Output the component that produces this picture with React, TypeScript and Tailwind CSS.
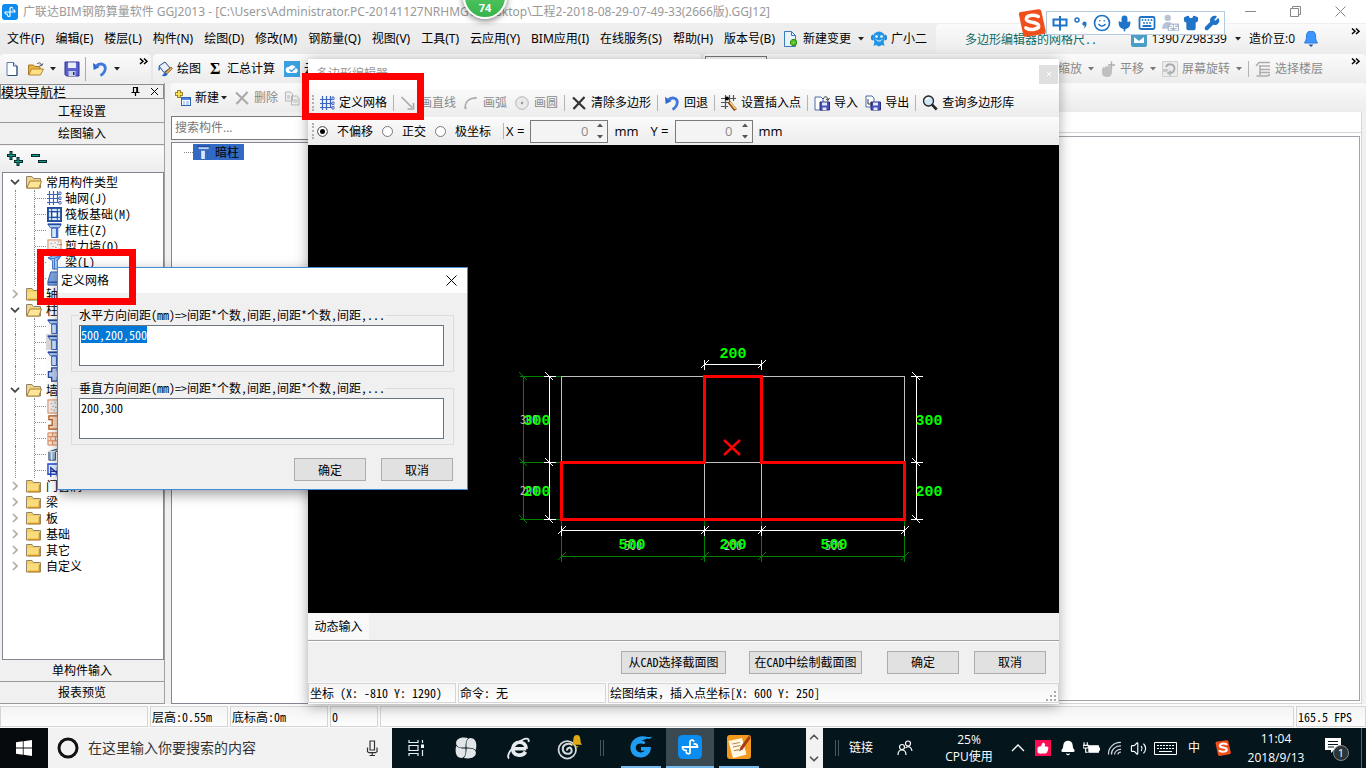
import { useEffect, useRef } from "react";
import type { ReactNode } from "react";
import {
  Smile, Mic, Shirt, Wrench, Keyboard, ThumbsUp, Bell, Volume2, ChevronUp, ChevronDown, X as XIcon,
} from "lucide-react";

const UI = "font-['Open_Sans','Noto_Sans_CJK_SC',sans-serif]";
const SONG = "font-['Noto_Sans_Mono_CJK_SC','Noto_Sans_CJK_SC',sans-serif]";

/* Fixed-pitch text: Latin glyphs take half the width of a Chinese glyph. */
function Song({ children }: { children: string }) {
  return <span className={`${SONG} block text-xs leading-4 whitespace-pre`}>{children}</span>;
}

function Svg({ children, size = 16, className = "" }: { children: ReactNode; size?: number; className?: string }) {
  return (
    <svg viewBox="0 0 16 16" width={size} height={size} fill="none" className={`shrink-0 ${className}`} aria-hidden="true">
      {children}
    </svg>
  );
}

const Caret = ({ color = "#222" }: { color?: string }) => (
  <svg width="6" height="4" viewBox="0 0 6 4" className="shrink-0" aria-hidden="true">
    <path d="M0 0h6L3 3.4z" fill={color} />
  </svg>
);
const More = () => (
  <svg width="9" height="7" viewBox="0 0 9 7" className="shrink-0" fill="none" stroke="#000" strokeWidth="1.5" aria-hidden="true">
    <path d="M1 .5l3 2.8L1 6M5 .5l3 2.8L5 6" />
  </svg>
);
const Sep = () => <span className="h-4 w-px shrink-0 bg-[#b4b4b4]" />;
const Grip = () => <span className="h-4 w-0 shrink-0 border-l-2 border-dotted border-[#b0b0b0]" />;

const AppLogo = ({ size = 16 }: { size?: number }) => (
  <Svg size={size}>
    <rect width="16" height="16" rx="3" fill="#0b8cf0" />
    <path d="M8 12V4.700C8 3.300 9.800 3 10.500 4M3 8h10M3 8c0 1.800 1.200 2.500 2.500 2.200M13 8c0-1.600-1-2.200-2.200-2M8 12c-.8.900-2.300.600-2.500-.600" stroke="#fff" strokeWidth="1.200" strokeLinecap="round" />
  </Svg>
);
const DocIcon = () => (
  <Svg>
    <path d="M3 1.500h6.500L13 5v9.500H3z" fill="#fdfeff" stroke="#5b7fa8" />
    <path d="M9.500 1.500V5H13" stroke="#3b608c" fill="#dbe8f6" />
    <path d="M13 5v9.500H4" stroke="#2f4c72" />
  </Svg>
);
const OpenIcon = () => (
  <Svg>
    <path d="M.500 14V4h5l1.500 1.500h5V8" fill="#e8b33c" stroke="#a8782a" />
    <path d="M3.500 8h12l-3 6H.800z" fill="#ffdf86" stroke="#b5862f" />
    <path d="M9 3c2-2 4-1 4.500 1.200M14.800 2.500l-1 2.200-2.200-.7" stroke="#3b4b60" />
  </Svg>
);
const SaveIcon = () => (
  <Svg>
    <path d="M1 1h14v14H2.500L1 13.500z" fill="#5a62cc" stroke="#2b3190" />
    <path d="M4 1.500h8V7H4z" fill="#e9edfb" />
    <path d="M4.500 10h7v5h-7z" fill="#cdd2ee" />
    <path d="M9 11h1.500v3H9z" fill="#23297c" />
  </Svg>
);
const UndoIcon = () => (
  <Svg>
    <path d="M1 2l.7 7 6-3z" fill="#2e66cf" />
    <path d="M4 5.500c3-4 9.500-3 9.300 2C13 11 11 13 8.500 14.500" stroke="#3f77dc" strokeWidth="2.800" />
  </Svg>
);
const PaintIcon = () => (
  <Svg>
    <path d="M2 5l6-4 5 6-6 4.500z" fill="#e8eef6" stroke="#2b4c7c" />
    <path d="M2 5c-1 2-1 4 0 5 1-1 1.500-2 1-4" fill="#3d7dca" />
    <path d="M15.500 7.500L10 13l-2 .5.500-2L14 6z" fill="#e2a64d" stroke="#7b5a26" strokeWidth=".7" />
    <path d="M8.500 11.500c-2 0-1.500 2.500-4 3 2.500 1.300 5.500.8 6-1.500z" fill="#2867bd" />
  </Svg>
);
const CloudIcon = () => (
  <Svg>
    <rect width="16" height="16" fill="#3aa0e0" />
    <path d="M4.500 12a3 3 0 01.3-6 4 4 0 017.200 1.200A2.500 2.500 0 0112 12z" fill="#fff" />
    <path d="M5.500 8.500L7.500 10.500l4-4" stroke="#3aa0e0" strokeWidth="1.400" />
  </Svg>
);
const NewItemIcon = () => (
  <Svg>
    <path d="M4 0v8M0 4h8" stroke="#7c6a18" strokeWidth="3.600" />
    <path d="M4 .8v6.400M.8 4h6.400" stroke="#f7e04a" strokeWidth="2" />
    <rect x="6.500" y="7.500" width="9" height="8" fill="#fff" stroke="#2f63b5" />
    <path d="M7 8h8v2H7z" fill="#4d89dd" />
    <path d="M8 12h2M11 12h3M8 14h2M11 14h3" stroke="#7aa5e0" />
  </Svg>
);
const Cross = ({ color }: { color: string }) => (
  <Svg><path d="M2 2.500l12 11.500M13.500 2L2.500 14" stroke={color} strokeWidth="2.200" /></Svg>
);
const CopyIcon = () => (
  <Svg>
    <path d="M1.500 2h5l2 2v7h-7zM7.500 6h5l2.500 2.300V15H7.500z" fill="#f0f0f0" stroke="#b5b5b5" />
    <path d="M3 6h3M3 8h3M9.500 10h4M9.500 12h4" stroke="#b5b5b5" />
  </Svg>
);
const GridIcon = () => (
  <Svg>
    <path d="M3.500 1v14M7.500 1v14M11.500 1v12M1 4.500h12M1 8.500h12M1 12.500h12" stroke="#3c63bd" strokeWidth="1.200" />
    <path d="M13 2h2v2.500h-2zM13 7h2v2.500h-2zM13 11.500h2V14h-2z" stroke="#3c63bd" strokeWidth=".9" />
  </Svg>
);
const LineIcon = () => <Svg><path d="M1.500 2L12 12.500M13.500 8v6h-6" stroke="#a8a8a8" strokeWidth="1.600" /></Svg>;
const ArcIcon = () => (
  <Svg>
    <path d="M2 13C2 7 6 3 12 3" stroke="#a8a8a8" strokeWidth="1.300" />
    <circle cx="2.500" cy="13" r="1.300" fill="#b5b5b5" /><circle cx="12.500" cy="3" r="1.300" fill="#b5b5b5" />
  </Svg>
);
const CircleIcon = () => (
  <Svg><circle cx="8" cy="8" r="6.300" fill="#e9e9e9" stroke="#b5b5b5" /><circle cx="8" cy="8" r="1.200" fill="#999" /></Svg>
);
const InsertIcon = () => (
  <Svg>
    <path d="M4.500 0v14M8.500 0v8M12.500 0v6M0 3.500h15M0 7.500h9M0 11.500h7" stroke="#555" strokeWidth="1.200" />
    <circle cx="6" cy="3.500" r="2" fill="#000" />
    <path d="M8 7l6.500 8" stroke="#8c4a20" strokeWidth="3.500" /><path d="M9 7l5.500 7" stroke="#f0cf72" strokeWidth="1.700" />
  </Svg>
);
const ImportIcon = () => (
  <Svg>
    <path d="M1 2h6l2 2v11H1z" fill="#fff" stroke="#4a6aa8" />
    <path d="M6 7h9.500v8H6z" fill="#4550b8" stroke="#262d80" />
    <path d="M8 7.500h5v3H8zM8.500 12.500h4V15h-4z" fill="#e5e8f8" />
    <path d="M9 4c1-3 5-3 5 1M15.500 3L14 5.500 12 4" stroke="#333" />
  </Svg>
);
const ExportIcon = () => (
  <Svg>
    <path d="M1 1h6l2 2v9H1z" fill="#fff" stroke="#4a6aa8" />
    <path d="M6 7h9.500v8H6z" fill="#4550b8" stroke="#262d80" />
    <path d="M8 7.500h5v3H8zM8.500 12.500h4V15h-4z" fill="#e5e8f8" />
    <path d="M3 4v5h4M5.500 7L7.500 9l-2 2" stroke="#333" />
  </Svg>
);
const SearchIcon = () => (
  <Svg>
    <circle cx="6.500" cy="6" r="5" fill="#cfe8f6" stroke="#222" strokeWidth="1.300" />
    <path d="M4 5c.5-1.500 1.500-2 3-2" stroke="#fff" strokeWidth="1.500" />
    <path d="M10 9.700l4.700 4.800" stroke="#222" strokeWidth="2.600" />
  </Svg>
);
const NewChangeIcon = () => (
  <Svg>
    <path d="M1.500.500h7l4 4v11h-11z" fill="#e8f3fd" stroke="#3b7cb8" />
    <path d="M8.500.500v4h4" stroke="#3b7cb8" />
    <path d="M10.500 8v7M7 11.500h7" stroke="#2e8f13" strokeWidth="3.800" /><path d="M10.500 9v5M8 11.500h5" stroke="#68cf2f" strokeWidth="1.800" />
  </Svg>
);
const MascotIcon = () => (
  <Svg>
    <path d="M2 4l-1.500 3L2 9M14 4l1.500 3L14 9" stroke="#1b7fd4" strokeWidth="2" />
    <circle cx="8" cy="6.500" r="6" fill="#2196e8" />
    <path d="M3.500 10h9l1 5-2.500-1L8 15.500 5 14l-2.500 1z" fill="#2196e8" />
    <circle cx="5.500" cy="5.500" r="1.300" fill="#fff" /><circle cx="10.500" cy="5.500" r="1.300" fill="#fff" />
    <path d="M5 8.500c1.500 2 4.500 2 6 0" stroke="#fff" />
  </Svg>
);
const HandIcon = () => (
  <Svg>
    <path d="M2 8l1.500-2 1.500.5L6 5l2 .5L9 5l2 1 1 1.500V11c0 3-2 5-5 5s-5-1.500-5-4z" fill="#c0c0c0" />
    <path d="M11.500.500v7M8 4h7" stroke="#adadad" strokeWidth="1.400" />
  </Svg>
);
const RotateIcon = () => (
  <Svg>
    <path d="M.500.500h15v15H.500z" fill="#ececec" stroke="#cfcfcf" />
    <path d="M4 6c1.500-4 8-3.500 8.500 1 .3 3-2 5-4.500 5" stroke="#a8a8a8" strokeWidth="1.800" /><path d="M9 9v6L4.500 12z" fill="#b5b5b5" />
    <path d="M1 8h6l-2 3H1z" fill="#c8c8c8" />
  </Svg>
);
const FloorsIcon = () => (
  <Svg><path d="M1 5l3-3.500h11M4 5h11M5 8.500h10M4 11.500h11M1.500 15H12l3-1.500M5 5v9" stroke="#adadad" strokeWidth="1.500" /></Svg>
);
const SogouIcon = ({ size = 16 }: { size?: number }) => (
  <Svg size={size}>
    <path d="M.500 3Q.300 2 1.500 1.700L11.500.200Q13 0 13.300 1.200L15.800 12.500Q16 14 14.500 14.300L4.500 15.900Q3.200 16 3 14.800z" fill="#f04e1a" />
    <path d="M11.600 4.300C9 3 4.500 3.500 4.800 6c.3 2 6.700 1.200 7 3.500.2 2.200-4.500 3-7.300 1.300" stroke="#fff" strokeWidth="2" strokeLinecap="round" />
  </Svg>
);

const ColumnIcon = () => (
  <Svg size={15}>
    <path d="M.800 1h14.400l-2 4H3.500z" fill="#b4d0f7" stroke="#3a66bd" />
    <path d="M1 1.500h14" stroke="#23499c" strokeWidth="1.600" />
    <path d="M5 5.500h6.500v10H5z" fill="#d7e7fc" stroke="#2c5ab8" />
    <path d="M9.500 5.500h2v10h-2z" fill="#3667c4" />
  </Svg>
);
const RaftIcon = () => (
  <Svg size={15}>
    <rect x="1" y="1" width="14" height="14" fill="#d5e8fa" stroke="#1d4c9c" strokeWidth="2" />
    <path d="M5 1v14M11 1v14M1 5h14M1 11h14" stroke="#1d4c9c" /><rect x="5" y="5" width="6" height="6" fill="#fff" stroke="#1d4c9c" strokeWidth="1.500" />
  </Svg>
);
const WallIcon = () => (
  <Svg size={15}>
    <rect x="1" y="1" width="14" height="14" fill="#f1efee" stroke="#d88250" />
    <path d="M4 5h1M8 4h1M11 6h1M6 8h1M9 9h1M4 11h1M12 11h1M7 12h1M12 3h1" stroke="#666" /><path d="M13 6h3M13 11h3" stroke="#c5652c" />
  </Svg>
);
const BeamIcon = () => (
  <Svg size={15}>
    <path d="M1 3l5-2h9l-4 5v9H6V6z" fill="#b9d5f8" stroke="#2d62b8" /><path d="M2 3.500h6L15 1M8 4v11M10 6l3-3" stroke="#3f7bd0" strokeWidth="1.300" />
  </Svg>
);
const SlabIcon = () => (
  <Svg size={15}><path d="M4 1h11v14H1V11z" fill="#7ea5df" stroke="#2d56a8" /><path d="M1 12h14" stroke="#2d56a8" strokeWidth="1.500" /></Svg>
);
const CrossColIcon = () => (
  <Svg size={15}><path d="M5 1h6v3h3v7h-3v4H5v-4H1.500V5H5z" fill="#b9cff5" stroke="#26479c" strokeWidth="1.400" /></Svg>
);
const PillarIcon = () => (
  <Svg size={15}><path d="M2 1h13v4h-3v6h3v4H2v-4h3.500V5H2z" fill="#fbd9bd" stroke="#b0561e" strokeWidth="1.300" /></Svg>
);
const BrickIcon = () => (
  <Svg size={15}><path d="M1 2h14v13H1zM1 6h14M1 10.500h14M6 2v4M11 2v4M4 6v4.500M9 6v4.500M6 10.500V15M12 10.500V15" fill="#fbe3d3" stroke="#d88250" /></Svg>
);
const CurtainIcon = () => (
  <Svg size={15}><path d="M2 5l12-4v3L9 5v9H2z" fill="#9ab6d2" stroke="#2d4a6c" /><path d="M2 5h7M5 6v8" stroke="#fff" /></Svg>
);
const LintelIcon = () => (
  <Svg size={15}><path d="M1 1h14v11H1z" fill="#e7f0ff" stroke="#1f4ad0" strokeWidth="1.500" /><path d="M4 15V5l7 6M4 9h8M11 4v11" stroke="#1b2f9a" strokeWidth="1.300" /></Svg>
);
const FolderIcon = ({ open = false }: { open?: boolean }) => (
  <Svg>
    <path d="M.500 14V2.500H6l1.500 2h7V14z" fill={open ? "#f2d48c" : "#f6cf63"} stroke="#8f8570" />
    {open ? (
      <path d="M4 7h11.500L13 14H.800z" fill="#ffe59a" stroke="#a8842c" />
    ) : (
      <path d="M1.200 6h12.600v7.400H1.200z" fill="#fbdc7c" />
    )}
    {!open && <path d="M13.500 6.500v7H2" stroke="#d08f1e" strokeWidth="1.500" />}
  </Svg>
);

type TreeRow = { label: string; state?: "open" | "closed"; icon?: ReactNode; selected?: boolean };
const tree: TreeRow[] = [
  { label: "常用构件类型", state: "open" },
  { label: "轴网(J)", icon: <GridIcon /> },
  { label: "筏板基础(M)", icon: <RaftIcon /> },
  { label: "框柱(Z)", icon: <ColumnIcon /> },
  { label: "剪力墙(Q)", icon: <WallIcon /> },
  { label: "梁(L)", icon: <BeamIcon /> },
  { label: "", icon: <SlabIcon /> },
  { label: "轴线", state: "closed" },
  { label: "柱", state: "open" },
  { label: "", icon: <ColumnIcon /> },
  { label: "", icon: <ColumnIcon />, selected: true },
  { label: "", icon: <ColumnIcon /> },
  { label: "", icon: <CrossColIcon /> },
  { label: "墙", state: "open" },
  { label: "", icon: <WallIcon /> },
  { label: "", icon: <PillarIcon /> },
  { label: "", icon: <BrickIcon /> },
  { label: "", icon: <CurtainIcon /> },
  { label: "", icon: <LintelIcon /> },
  { label: "门窗洞", state: "closed" },
  { label: "梁", state: "closed" },
  { label: "板", state: "closed" },
  { label: "基础", state: "closed" },
  { label: "其它", state: "closed" },
  { label: "自定义", state: "closed" },
];

function TreeLine({ row }: { row: TreeRow }) {
  if (row.state) {
    return (
      <li className="flex h-4 items-center">
        <span className="flex w-[23px] justify-center">
          {row.state === "open" ? (
            <svg width="10" height="6" viewBox="0 0 10 6" fill="none" stroke="#444" strokeWidth="1.800" aria-hidden="true"><path d="M1 .8l4 4 4-4" /></svg>
          ) : (
            <svg width="6" height="10" viewBox="0 0 6 10" fill="none" stroke="#aaa" strokeWidth="1.600" aria-hidden="true"><path d="M1 1l4 4-4 4" /></svg>
          )}
        </span>
        <FolderIcon open={row.state === "open"} />
        <span className="ml-1"><Song>{row.label}</Song></span>
      </li>
    );
  }
  return (
    <li className="flex h-4 items-stretch">
      <span className="ml-3 w-[19px] border-l border-dotted border-[#888]" />
      <span className="flex w-3 items-center border-l border-dotted border-[#888]">
        <span className="w-full border-t border-dotted border-[#888]" />
      </span>
      <span className={`flex w-4 items-center justify-center overflow-hidden ${row.selected ? "bg-[#d9d9d9]" : ""}`}>{row.icon}</span>
      <span className="ml-[3px]"><Song>{row.label}</Song></span>
    </li>
  );
}

const menus = ["文件(F)", "编辑(E)", "楼层(L)", "构件(N)", "绘图(D)", "修改(M)", "钢筋量(Q)", "视图(V)", "工具(T)", "云应用(Y)", "BIM应用(I)", "在线服务(S)", "帮助(H)", "版本号(B)"];

const bar = "bg-linear-to-b from-[#fbfbfb] to-[#ececec]";

function Tool({ icon, label, off = false }: { icon?: ReactNode; label: string; off?: boolean }) {
  return (
    <button type="button" disabled={off} className={`flex shrink-0 items-center gap-1 text-xs leading-4 ${off ? "text-[#8a8a8a]" : "text-black"}`}>
      {icon}
      <span className="whitespace-nowrap">{label}</span>
    </button>
  );
}

function TitleBar() {
  return (
    <header className="flex h-[23px] shrink-0 items-center bg-white pl-0.5 text-xs text-[#999]">
      <AppLogo />
      <h1 className="ml-[5px] font-['Noto_Sans','Noto_Sans_CJK_SC',sans-serif] whitespace-nowrap">广联达BIM钢筋算量软件 GGJ2013 - [C:\Users\Administrator.PC-20141127NRHMGV\Desktop\工程2-2018-08-29-07-49-33(2666版).GGJ12]</h1>
      <div className="ml-auto flex items-center gap-[34px] pr-5">
        <button type="button" aria-label="最小化"><svg width="11" height="11" viewBox="0 0 11 11" stroke="#888"><path d="M0 5.500h11" /></svg></button>
        <button type="button" aria-label="还原"><svg width="11" height="11" viewBox="0 0 11 11" stroke="#888" fill="none"><path d="M.500 2.500h8v8h-8zM2.500 2.500v-2h8v8h-2" /></svg></button>
        <button type="button" aria-label="关闭"><svg width="11" height="11" viewBox="0 0 11 11" stroke="#888"><path d="M.500.500l10 10M10.500.500l-10 10" /></svg></button>
      </div>
    </header>
  );
}

function MenuBar() {
  return (
    <div className="flex h-[31px] shrink-0 items-center bg-linear-to-b from-[#efefef] to-[#e9e9e9] text-xs text-black">
      <nav className="flex items-center gap-[11px] pl-[7px] font-['Noto_Sans','Noto_Sans_CJK_SC',sans-serif]">
        {menus.map((m) => (
          <button key={m} type="button" className="whitespace-nowrap leading-4">{m}</button>
        ))}
      </nav>
      <div className="ml-2 flex items-center gap-[7px]">
        <Tool icon={<NewChangeIcon />} label="新建变更" />
        <Caret />
        <Tool icon={<MascotIcon />} label="广小二" />
      </div>
      <div className={`ml-auto flex h-[30px] w-[430px] shrink-0 items-center self-end rounded-l pl-[29px] pr-[6px] ${bar}`}>
        <a href="#grid" className="text-[#0f6b66]"><Song>多边形编辑器的网格尺..</Song></a>
        <span className="ml-auto flex items-center gap-[5px]">
          <Svg><rect width="16" height="16" rx="2" fill="#4b9fc6" /><path d="M3 6l5 4 5-4v6H3z" fill="#fff" /></Svg>
          <span>13907298339</span>
        </span>
        <span className="ml-2"><Caret /></span>
        <span className="ml-2 whitespace-nowrap">造价豆:0</span>
        <Svg className="ml-2"><path d="M8 0c3 0 4.500 2 4.500 5 0 4 1 5 2 7h-13c1-2 2-3 2-7C3.500 2 5 0 8 0z" fill="#3d95ff" stroke="#2b79dc" /><path d="M5.500 13.500h5L8 16z" fill="#1f4f96" /></Svg>
        <span className="ml-8 self-start pt-1"><More /></span>
      </div>
    </div>
  );
}

function MainToolbar() {
  return (
    <div className="flex h-[29px] shrink-0 bg-[#e8e8e8] text-xs">
      <div className={`flex w-[151px] shrink-0 items-center rounded pl-1 ${bar}`}>
        <button type="button" aria-label="新建工程"><DocIcon /></button>
        <button type="button" aria-label="打开" className="ml-2"><OpenIcon /></button>
        <span className="ml-[6px]"><Caret /></span>
        <button type="button" aria-label="保存" className="ml-2"><SaveIcon /></button>
        <span className="ml-[5px]"><span className="block h-6 w-px bg-[#aaa]" /></span>
        <button type="button" aria-label="撤销" className="ml-1.5"><UndoIcon /></button>
        <span className="ml-1.5"><Caret /></span>
        <span className="ml-[19px] self-start pt-1"><More /></span>
      </div>
      <div className={`ml-0.5 flex w-[548px] shrink-0 items-center gap-[9px] rounded pl-1 ${bar}`}>
        <Tool icon={<PaintIcon />} label="绘图" />
        <button type="button" className="flex items-center gap-[7px] text-xs leading-4">
          <span className="w-[10px] font-['Liberation_Serif',serif] text-base font-bold leading-4">Σ</span>汇总计算
        </button>
        <Tool icon={<CloudIcon />} label="云" />
      </div>
      <div className={`ml-0.5 flex flex-1 items-center rounded pl-0.5 pr-[6px] ${bar}`}>
        <select aria-label="楼层" className="h-[25px] w-[62px] appearance-none border border-[#777] bg-white"><option>首层</option></select>
        <div className="ml-auto flex items-center gap-1.5 text-[#7a7a7a]">
          <Tool label="缩放" off /><Caret color="#777" />
          <Tool icon={<HandIcon />} label="平移" off /><Caret color="#777" />
          <Tool icon={<RotateIcon />} label="屏幕旋转" off /><Caret color="#777" />
          <Sep />
          <Tool icon={<FloorsIcon />} label="选择楼层" off />
        </div>
        <span className="ml-7 self-start pt-1"><More /></span>
      </div>
    </div>
  );
}

const navButton = "h-[22px] shrink-0 border-b border-[#9a9a9a] bg-[#f0f0f0] pb-px text-center";

function NavPanel() {
  return (
    <aside className="flex w-[165px] shrink-0 flex-col border-r border-[#a0a0a0] pt-px">
      <div className="mb-0.5 flex h-[15px] shrink-0 items-center border border-[#8a8a8a] pr-1">
        <span className={`${SONG} text-[13px] leading-3`}>模块导航栏</span>
        <button type="button" aria-label="固定" className="ml-auto"><svg width="9" height="9" viewBox="0 0 9 9" fill="none" stroke="#000" strokeWidth="1.200"><path d="M2.500.500h4v5h-4zM.500 5.500h8M4.500 5.500V9M5.800 1v4" /></svg></button>
        <button type="button" aria-label="关闭导航栏" className="ml-2.5"><svg width="9" height="9" viewBox="0 0 9 9" stroke="#000"><path d="M1 1l7 7M8 1L1 8" /></svg></button>
      </div>
      <button type="button" className={navButton}><Song>工程设置</Song></button>
      <button type="button" className={navButton}><Song>绘图输入</Song></button>
      <div className={`mt-px flex h-[26px] shrink-0 items-center gap-2 pl-[7px] ${bar}`}>
        <button type="button" aria-label="全部展开"><Svg><path d="M4 0v9M0 4.500h9M11 6v9M7 10.500h9" stroke="#002b28" strokeWidth="3" /><path d="M4 1v7M1 4.500h7M11 7v7M8 10.500h7" stroke="#16a08f" /></Svg></button>
        <button type="button" aria-label="全部折叠"><Svg><path d="M0 4.500h9M7 10.500h9" stroke="#002b28" strokeWidth="3" /><path d="M1 4.500h7M8 10.500h7" stroke="#16a08f" /></Svg></button>
      </div>
      <ul className="ml-0.5 flex-1 overflow-hidden border border-[#828790] bg-white pt-px">
        {tree.map((row, i) => <TreeLine key={i} row={row} />)}
      </ul>
      <button type="button" className={navButton}><Song>单构件输入</Song></button>
      <button type="button" className={navButton}><Song>报表预览</Song></button>
    </aside>
  );
}

function ComponentPanel() {
  return (
    <section className="ml-1.5 flex w-[184px] shrink-0 flex-col">
      <div className={`flex h-[29px] shrink-0 items-center rounded pl-1 ${bar}`}>
        <Tool icon={<NewItemIcon />} label="新建" />
        <span className="ml-0.5"><Caret /></span>
        <span className="ml-[7px]"><Tool icon={<Cross color="#ababab" />} label="删除" off /></span>
        <button type="button" aria-label="复制" className="ml-1.5"><CopyIcon /></button>
      </div>
      <input aria-label="搜索构件" placeholder="搜索构件..." className="mt-1 h-6 shrink-0 border border-[#7a7a7a] bg-white px-[3px] pb-0.5 text-xs placeholder:text-[#777]" />
      <div className="mt-0.5 flex flex-1 items-start border border-[#828790] bg-white pt-px pl-3">
        <span className="mt-2 w-[9px] border-t border-dotted border-[#888]" />
        <span className="flex h-4 w-[51px] items-center gap-1 bg-[#316ac5] pl-[3px]"><ColumnIcon /><Song>暗柱</Song></span>
      </div>
    </section>
  );
}

function StatusBar() {
  const cell = "flex h-[21px] items-center border border-[#d5d5d5] bg-linear-to-b from-[#f4f4f4] to-[#fdfdfd] px-px";
  return (
    <footer className="flex h-6 shrink-0 items-end gap-0.5 bg-[#fafafa] pb-px">
      <div className={`w-[148px] ${cell}`} />
      <div className={`w-[78px] ${cell}`}><Song>层高:0.55m</Song></div>
      <div className={`w-[98px] ${cell}`}><Song>底标高:0m</Song></div>
      <div className={`w-12 ${cell}`}><Song>0</Song></div>
      <div className={`flex-1 ${cell}`} />
      <div className={`w-[70px] ${cell}`}><Song>165.5 FPS</Song></div>
    </footer>
  );
}

function DimLine({ pts, at, vertical, color, lead }: { pts: number[]; at: number; vertical?: boolean; color: string; lead: number }) {
  const p = (a: number, b: number) => (vertical ? `${at + 0.5 + b} ${a + 0.5}` : `${a + 0.5} ${at + 0.5 + b}`);
  return (
    <g stroke={color}>
      <path d={`M${p(pts[0], 0)}L${p(pts[pts.length - 1], 0)}`} />
      {pts.map((a) => (
        <path key={a} d={`M${p(a, -lead)}L${p(a, lead)}` + (vertical ? `M${p(a - 4, -4)}L${p(a + 4, 4)}` : `M${p(a + 4, -4)}L${p(a - 4, 4)}`)} />
      ))}
    </g>
  );
}

function SectionDrawing() {
  const xs = [253, 396, 453, 596];
  const ys = [231, 317, 374];
  const gray: [string, number, number][] = [["300", 221, 275], ["200", 221, 346], ["500", 325, 401], ["200", 425, 401], ["500", 526, 401]];
  const green: [string, number, number][] = [["200", 425, 208], ["300", 229, 275], ["200", 229, 346], ["300", 621, 275], ["200", 621, 346], ["500", 324, 399], ["200", 425, 399], ["500", 526, 399]];
  return (
    <svg width="751" height="468" viewBox="0 0 751 468" fill="none" role="img" aria-label="截面图">
      <g shapeRendering="crispEdges">
        <g stroke="#c0c0c0">
          <path d="M253.500 231.500h343v143h-343zM396.500 231v143M453.500 231v143M253 317.500h343" />
        </g>
        <g stroke="#008000">
          <path d={ys.map((y) => `M212 ${y + 0.5}H253`).join("") + xs.map((x) => `M${x + 0.5} 374V416`).join("")} />
        </g>
        <DimLine pts={ys} at={215} vertical color="#008000" lead={4} />
        <DimLine pts={xs} at={411} color="#008000" lead={5} />
        <DimLine pts={ys} at={241} vertical color="#fff" lead={6} />
        <DimLine pts={ys} at={608} vertical color="#fff" lead={6} />
        <DimLine pts={[396, 453]} at={219} color="#fff" lead={5} />
        <DimLine pts={xs} at={385} color="#fff" lead={5} />
        <path d="M396.500 231.500h57v86h143v57h-343v-57h143z" stroke="#f00" strokeWidth="3" />
      </g>
      <path d="M416 295l16 15M432 295l-16 15" stroke="#f00" strokeWidth="2.400" />
      {gray.map(([t, x, y], i) => (
        <text key={i} x={x} y={y + 4} fill="#c0c0c0" fontSize="12" textAnchor="middle" className="font-['Noto_Sans_Mono_CJK_SC',monospace]">{t}</text>
      ))}
      {green.map(([t, x, y], i) => (
        <text key={i} x={x} y={y + 5} fill="#0f0" fontSize="15" fontWeight="700" textAnchor="middle" className="font-['Liberation_Mono',monospace]">{t}</text>
      ))}
    </svg>
  );
}

function Offset({ label, id }: { label: string; id: string }) {
  return (
    <div className="flex items-center gap-[6px] text-[13px] leading-4">
      <label htmlFor={id}>{label}</label>
      <div className="flex h-[23px] w-[78px] items-center border border-[#7a7a7a] bg-[#f4f4f4] pr-1">
        <input id={id} defaultValue="0" className="w-full min-w-0 bg-transparent pr-[9px] text-right text-[#8a8a8a]" />
        <div className="flex flex-col gap-2">
          <button type="button" aria-label={`${id} 增加`} className="h-1"><svg width="6" height="4" viewBox="0 0 6 4"><path d="M0 4h6L3 .5z" fill="#555" /></svg></button>
          <button type="button" aria-label={`${id} 减少`} className="h-1"><svg width="6" height="4" viewBox="0 0 6 4"><path d="M0 0h6L3 3.500z" fill="#555" /></svg></button>
        </div>
      </div>
      <span>mm</span>
    </div>
  );
}

const winButton = "flex h-[23px] items-center justify-center border border-[#adadad] bg-[#e1e1e1]";

function PolygonEditor() {
  const cell = "flex h-5 items-center border border-[#d5d5d5] bg-linear-to-b from-[#f4f4f4] to-[#fdfdfd] px-px";
  return (
    <section className="absolute top-[59px] bottom-16 left-[308px] flex w-[751px] flex-col bg-[#f0f0f0] shadow-[0_2px_12px_rgba(0,0,0,0.35)]">
      <header className="flex h-[30px] shrink-0 items-center bg-white pl-2 text-xs text-[#999]">
        <h2 className="leading-4">多边形编辑器</h2>
        <button type="button" aria-label="关闭编辑器" className="mr-px ml-auto flex h-[19px] w-[19px] items-center justify-center bg-[#e0e0e0] text-white"><XIcon size={8} strokeWidth={3} /></button>
      </header>
      <div className={`flex h-7 shrink-0 items-center gap-1.5 pl-1 text-xs ${bar}`}>
        <div className="flex items-center gap-[5px]"><Grip /><Tool icon={<GridIcon />} label="定义网格" /></div>
        <Sep />
        <div className="flex items-center gap-[7px]">
          <Tool icon={<LineIcon />} label="画直线" off />
          <Tool icon={<ArcIcon />} label="画弧" off />
          <Tool icon={<CircleIcon />} label="画圆" off />
        </div>
        <Sep />
        <Tool icon={<Cross color="#333" />} label="清除多边形" />
        <Sep />
        <Tool icon={<UndoIcon />} label="回退" />
        <Sep />
        <Tool icon={<InsertIcon />} label="设置插入点" />
        <Sep />
        <div className="flex items-center gap-[7px]">
          <Tool icon={<ImportIcon />} label="导入" />
          <Tool icon={<ExportIcon />} label="导出" />
        </div>
        <Sep />
        <Tool icon={<SearchIcon />} label="查询多边形库" />
      </div>
      <div className={`flex h-7 shrink-0 items-center pl-1 ${bar}`}>
        <Grip />
        <fieldset className="ml-[3px] flex items-center gap-[9px]">
          {["不偏移", "正交", "极坐标"].map((t, i) => (
            <label key={t} className="flex items-center gap-[9px]">
              <input type="radio" name="offset" defaultChecked={i === 0} className="m-0 h-[11px] w-[11px] appearance-none rounded-full border border-[#777] bg-white checked:bg-black checked:shadow-[inset_0_0_0_2px_#fff]" />
              <Song>{t}</Song>
            </label>
          ))}
        </fieldset>
        <span className="mr-0.5 ml-3 flex"><Sep /></span>
        <Offset label="X =" id="offset-x" />
        <span className="w-3" />
        <Offset label="Y =" id="offset-y" />
      </div>
      <div className="flex-1 overflow-hidden bg-black"><SectionDrawing /></div>
      <div className="flex h-7 shrink-0 border-b border-[#a0a0a0]">
        <button type="button" className="flex h-[26px] w-[61px] items-center justify-center bg-[#f9f9f9]"><Song>动态输入</Song></button>
      </div>
      <div className="flex h-[41px] shrink-0 items-center justify-end border-t border-white pr-[13px]">
        <button type="button" className={`w-[105px] ${winButton}`}><Song>从CAD选择截面图</Song></button>
        <button type="button" className={`ml-[23px] w-[113px] ${winButton}`}><Song>在CAD中绘制截面图</Song></button>
        <button type="button" className={`ml-[25px] w-[72px] ${winButton}`}><Song>确定</Song></button>
        <button type="button" className={`ml-[15px] w-[72px] ${winButton}`}><Song>取消</Song></button>
      </div>
      <footer className="flex h-[22px] shrink-0 items-center gap-0.5 bg-[#fafafa]">
        <div className={`w-[148px] ${cell}`}><Song>坐标 (X: -810 Y: 1290)</Song></div>
        <div className={`w-[148px] ${cell}`}><Song>命令: 无</Song></div>
        <div className={`flex-1 justify-between ${cell}`}>
          <Song>绘图结束，插入点坐标[X: 600 Y: 250]</Song>
          <svg width="11" height="11" viewBox="0 0 11 11" fill="#aaa" className="self-end" aria-hidden="true"><path d="M8 0h2v2H8zM4 4h2v2H4zM8 4h2v2H8zM0 8h2v2H0zM4 8h2v2H4zM8 8h2v2H8z" /></svg>
        </div>
      </footer>
    </section>
  );
}

function GridDialog() {
  const first = useRef<HTMLTextAreaElement>(null);
  useEffect(() => {
    first.current?.focus();
    first.current?.select();
  }, []);
  const area = `mt-0.5 block h-[41px] w-full resize-none border border-[#6b7580] bg-white px-px pt-px pb-0 ${SONG} text-xs leading-4 text-black outline-none selection:bg-[#0078d7] selection:text-white`;
  const group = "h-[65px] border border-[#dcdcdc] pr-[9px] pl-[7px] pb-0";
  return (
    <section role="dialog" aria-labelledby="grid-title" className="absolute top-[267px] left-[57px] flex h-[223px] w-[411px] flex-col border border-[#3f8ddb] bg-[#f0f0f0] shadow-[2px_4px_12px_rgba(0,0,0,0.4)]">
      <header className="flex h-[25px] shrink-0 items-center bg-white pr-[10px] pl-[3px]">
        <h2 id="grid-title" className="text-xs leading-4">定义网格</h2>
        <button type="button" aria-label="关闭对话框" className="ml-auto"><svg width="11" height="11" viewBox="0 0 11 11" stroke="#000"><path d="M.500.500l10 10M10.500.500l-10 10" /></svg></button>
      </header>
      <div className="flex flex-col gap-2 px-[13px] pt-[14px]">
        <fieldset className={group}>
          <legend className="h-4 leading-4"><label htmlFor="grid-h"><Song>{"水平方向间距(mm)=>间距*个数,间距,间距*个数,间距,..."}</Song></label></legend>
          <textarea ref={first} id="grid-h" defaultValue="500,200,500" className={area} />
        </fieldset>
        <fieldset className={group}>
          <legend className="h-4 leading-4"><label htmlFor="grid-v"><Song>{"垂直方向间距(mm)=>间距*个数,间距,间距*个数,间距,..."}</Song></label></legend>
          <textarea id="grid-v" defaultValue="200,300" className={area} />
        </fieldset>
      </div>
      <div className="mt-[13px] flex justify-end gap-[15px] pr-[14px]">
        <button type="button" className={`w-[72px] ${winButton}`}><Song>确定</Song></button>
        <button type="button" className={`w-[72px] ${winButton}`}><Song>取消</Song></button>
      </div>
    </section>
  );
}

function ImeBar() {
  return (
    <div className="absolute top-[9px] right-[141px] flex items-center">
      <SogouIcon size={28} />
      <div className="flex h-6 w-[179px] items-center justify-between border border-[#b5cbe0] bg-white pr-1 pl-1 text-[#1f74c8]">
        <Svg className="ml-px"><path d="M1.500 4.500h13v6h-13zM8 1v14.500" stroke="#1f74c8" strokeWidth="2" /></Svg>
        <Svg><circle cx="4" cy="5" r="2" stroke="#1f74c8" strokeWidth="1.500" /><path d="M9.500 8a2 2 0 114 1c0 2.500-1.500 4-3 4.500 1-1 1.300-2 1.200-2.700A2 2 0 019.500 8z" fill="#1f74c8" /></Svg>
        <Smile size={18} strokeWidth={2.2} />
        <Mic size={17} strokeWidth={2.4} fill="#1f74c8" />
        <Keyboard size={18} strokeWidth={2.4} />
        <Svg size={18}><circle cx="6" cy="3.500" r="2.800" fill="#b8c4d6" /><path d="M1 13c0-5 3-6 5-6s4 1 4.500 3V13z" fill="#b8c4d6" /><rect x="6" y="8.500" width="10" height="6.500" fill="#a9b7cc" /><path d="M7.500 10h2.500v2H7.500v2H10M14.500 10H12v2h2.500v2H12" stroke="#fff" /></Svg>
        <Shirt size={16} fill="#1f74c8" />
        <Wrench size={16} fill="#1f74c8" />
      </div>
    </div>
  );
}

function TaskButton({ label, children, className = "" }: { label: string; children: ReactNode; className?: string }) {
  return <button type="button" aria-label={label} className={`flex h-full shrink-0 items-center justify-center ${className}`}>{children}</button>;
}

function Taskbar() {
  return (
    <footer className="flex h-10 shrink-0 items-center bg-[#04161c] text-xs text-white">
      <TaskButton label="开始" className="w-12 bg-[#060a0c]">
        <Svg><path d="M0 2.300L6.800 1.300V7.600H0zM7.600 1.200L16 0v7.600H7.600zM0 8.400h6.800v6.300L0 13.700zM7.600 8.400H16V16l-8.400-1.200z" fill="#fff" /></Svg>
      </TaskButton>
      <label className="flex h-full w-[344px] shrink-0 items-center bg-[#f2f2f2] pr-3 pl-[9px]">
        <svg width="22" height="22" viewBox="0 0 22 22" fill="none" aria-hidden="true"><circle cx="11" cy="11" r="9" stroke="#111" strokeWidth="3" /></svg>
        <input aria-label="搜索" placeholder="在这里输入你要搜索的内容" className="ml-[9px] min-w-0 flex-1 bg-transparent text-sm placeholder:text-[#333]" />
        <Svg><path d="M6 1h4.500v9H6zM3.500 7.500v4.200l1.500 1H11.500l1.500-1V7.500M8.200 13v2.500M5.500 15.500h5.500" stroke="#333" strokeWidth="1.200" /></Svg>
      </label>
      <TaskButton label="任务视图" className="w-12"><Svg><path d="M1 0v2.500h9V0M1 16v-2.500h9V16M1 5.500h9v5H1zM14.500 0v3M14.500 10v6" stroke="#e8eef0" strokeWidth="1.200" /><path d="M13 4.500h3V8h-3z" fill="#fff" /></Svg></TaskButton>
      <TaskButton label="浏览器" className="w-[52px]">
        <Svg size={22}><path d="M7.600 7.600C7.600 4 8.500 2 9.500.800 6 0 1 .300.800 4.500c0 3 3.500 3.500 6.800 3.100z" fill="#e2e6e8" /><path d="M8.400 7.600c3.600 0 5.600.9 6.800 1.900.8-3.500.5-8.500-3.700-8.700-3 0-3.500 3.500-3.100 6.800z" fill="#e2e6e8" /><path d="M8.400 8.400c0 3.600-.9 5.600-1.900 6.800 3.500.8 8.500.5 8.700-3.700 0-3-3.500-3.500-6.800-3.100z" fill="#e2e6e8" /><path d="M7.600 8.400C4 8.400 2 7.500.800 6.500 0 10 .300 15 4.500 15.200c3 0 3.500-3.500 3.100-6.800z" fill="#e2e6e8" /></Svg>
      </TaskButton>
      <TaskButton label="Internet Explorer" className="w-[52px]">
        <Svg size={24}><path d="M13.500 8.500H4.500M13 10.500c-2 3.500-8.500 3-8.500-2 0-5.500 9-6 9 0" stroke="#e8ecee" strokeWidth="2.400" /><path d="M2 15c-2-2 1.500-7 6-10.500s8-3.500 7-.5" stroke="#e8ecee" strokeWidth="1.200" /></Svg>
      </TaskButton>
      <TaskButton label="提醒" className="w-[50px]">
        <Svg size={28}><circle cx="7" cy="9" r="5" stroke="#d5dadc" strokeWidth="1" /><path d="M10 6.500c-2-2-6-.5-5.500 2.500s5 3 5 .5-3-2-2.500 0" stroke="#d5dadc" strokeWidth="1.200" /><path d="M12.500.500c2 0 2 2 2.200 4.500l.8 1.200h-6l.8-1.200C10.500 2.500 10.500.500 12.500.500zM11.500 7h2l-1 1z" fill="#e2a914" /></Svg>
      </TaskButton>
      <span className="mx-1.5 h-4 w-1 shrink-0 border-x border-[#4a565a]" />
      <TaskButton label="广联达" className="ml-[11px] w-10 border-b-2 border-[#76b9ed]">
        <Svg size={24}><path d="M15.500 1c-1 2-2.500 1.500-3.500 1.300L8 4c3-.5 3.500 1.500 2 2C7 5 4.500 6 4.500 8.500S8 13 10.500 10.500H8V8h6.500C15 12 11.500 15 8 15 3.500 15 .5 12 1 7.500 1.500 3 6 .500 9.500.800 12 1 13.500 1.800 15.500 1z" fill="#1e9df2" /></Svg>
      </TaskButton>
      <TaskButton label="钢筋算量" className="ml-[5px] w-12 border-b-2 border-[#76b9ed] bg-[#3a4a50]"><AppLogo size={24} /></TaskButton>
      <TaskButton label="笔记" className="ml-[5px] w-10 border-b-2 border-[#76b9ed]">
        <Svg size={24}><rect width="16" height="16" rx="2" fill="#f39a1e" /><path d="M1 4l9-2 3 11-9 2.500z" fill="#fff8e5" /><path d="M3.500 6l5-1M4 8l5-1M4.500 10.500L8 9.800" stroke="#b28a54" strokeWidth=".8" /><path d="M14.500.500L9 8l-1 3 2.500-1.500L15.800 2z" fill="#a53d15" /></Svg>
      </TaskButton>
      <div className="ml-auto flex h-full shrink-0 items-center">
        <div className="flex h-full w-[17px] flex-col items-center justify-between bg-[#f2f2f2] py-0.5 text-[#555]">
          <ChevronUp size={14} strokeWidth={3} /><ChevronDown size={14} strokeWidth={3} />
        </div>
        <span className="ml-3 h-4 w-1 border-x border-[#4a565a]" />
        <span className="w-11 text-center">链接</span>
        <TaskButton label="人脉" className="w-11"><Svg><circle cx="5" cy="7" r="2.500" stroke="#fff" strokeWidth="1.200" /><circle cx="11" cy="3.500" r="2.500" stroke="#fff" strokeWidth="1.200" /><path d="M1 15c0-3 1.500-5 4-5s4 2 4 5M8.500 8c3-3 6-.5 6.500 3" stroke="#fff" strokeWidth="1.200" /></Svg></TaskButton>
        <div className="w-[84px] text-center leading-[17px]"><div>25%</div><div>CPU使用</div></div>
        <div className="flex h-full items-center gap-[7px]">
          <svg width="14" height="8" viewBox="0 0 14 8" fill="none" stroke="#fff" strokeWidth="1.300" aria-hidden="true"><path d="M1 7l6-6 6 6" /></svg>
          <span className="ml-[3px] flex h-4 w-4 items-center justify-center bg-[#ff0a54]"><ThumbsUp size={12} fill="#fff" /></span>
          <Bell size={16} fill="#fff" className="ml-0.5" />
          <Svg size={17}><path d="M5.500 5.500h9v6h-9z" fill="#fff" stroke="#fff" strokeWidth="1" /><path d="M15.500 7v3" stroke="#fff" /><path d="M1 2v3M4 2v3M0 5h5v2.500H0zM2.500 7.500v4h2" stroke="#fff" strokeWidth="1.100" fill="#04161c" /></Svg>
          <Svg><path d="M1.500 14.500C1 8 7 2 14 2.500M4.500 14.500C4 10 8.500 5.500 14 6M7.500 14.500C7.500 12 10.500 9 14 9.300M11 14.500c0-1.500 1.500-2.500 3-2.500" stroke="#d5dadc" strokeWidth="1.200" /></Svg>
          <Volume2 size={17} strokeWidth={1.600} />
          <svg width="23" height="13" viewBox="0 0 23 13" fill="none" stroke="#fff" aria-hidden="true"><path d="M.500.500h22v12H.500z" /><path d="M3 3.500h17M3 6.500h17" strokeDasharray="2 1" /><path d="M5 9.500h13" /></svg>
          <span className="mx-1 text-xs">中</span>
          <span className="mx-1"><SogouIcon /></span>
        </div>
        <div className="ml-1 w-[74px] text-center leading-[19px]"><div>11:04</div><div>2018/9/13</div></div>
        <TaskButton label="通知" className="w-12">
          <svg width="26" height="26" viewBox="0 0 26 26" aria-hidden="true"><path d="M1 3h16v12h-7l-3 3v-3H1z" fill="#fff" /><path d="M4 6.500h10M4 9.500h10M4 12h6" stroke="#04161c" /><circle cx="17" cy="18" r="7.500" fill="#2b3438" stroke="#888" /><text x="17" y="22" fill="#fff" fontSize="11" textAnchor="middle" fontFamily="Open Sans, sans-serif">1</text></svg>
        </TaskButton>
        <span className="h-full w-[5px] border-l border-[#56666b]" />
      </div>
    </footer>
  );
}

export default function App() {
  return (
    <div className={`relative flex h-screen w-full flex-col overflow-hidden bg-[#f0f0f0] text-black ${UI}`}>
      <TitleBar />
      <MenuBar />
      <MainToolbar />
      <main className="flex min-h-0 flex-1">
        <NavPanel />
        <ComponentPanel />
        <section className="ml-1 flex flex-1 flex-col">
          <div className={`h-[29px] shrink-0 rounded ${bar}`} />
          <div className="mr-1 h-[21px] shrink-0 border-r border-b border-[#d5d5d5] bg-white" />
          <div className="mr-1 flex flex-1 border-r border-b border-[#d5d5d5] bg-white pt-[3px] pr-px pb-0.5">
            <div className="flex-1 border border-[#a0a3aa] bg-white" />
          </div>
        </section>
      </main>
      <StatusBar />
      <Taskbar />
      <PolygonEditor />
      <GridDialog />
      <div className="pointer-events-none absolute top-[73px] left-[302px] h-[47px] w-[122px] border-7 border-[#fe0000]" />
      <div className="pointer-events-none absolute top-[249px] left-[37px] h-14 w-[99px] border-7 border-[#fe0000]" />
      <div className="absolute -top-[25px] left-[463px] flex h-[44px] w-[44px] items-end justify-center rounded-full border-2 border-white bg-linear-to-b from-[#5fd36f] to-[#38b34c] pb-[3px] text-[11px] font-bold leading-3 text-white shadow-[0_2px_6px_rgba(0,0,0,0.5)]">74</div>
      <ImeBar />
    </div>
  );
}
